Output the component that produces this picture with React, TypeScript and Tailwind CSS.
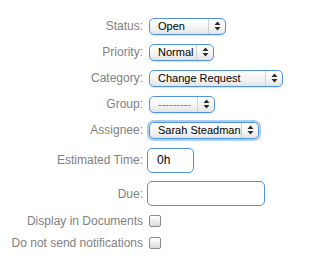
import React from "react";

const label = "w-[143px] shrink-0 text-right text-[12px] text-[#808080]";

function Arrows() {
  return (
    <svg width="7" height="10" viewBox="0 0 7 10">
      <path d="M3.5 0.5 L6.5 4 L0.5 4 Z" fill="#2b2b2b" />
      <path d="M0.5 6 L6.5 6 L3.5 9.5 Z" fill="#2b2b2b" />
    </svg>
  );
}

function Select({ value, width, focus, muted }: { value: string; width: string; focus?: boolean; muted?: boolean }) {
  return (
    <div
      className={`ml-[6px] flex h-[17px] ${width} items-stretch rounded-[5px] border border-[#4f93dc] bg-gradient-to-b from-white via-[#f6f6f6] to-[#e4e4e4] ${
        focus ? "shadow-[0_0_0_2px_#a9cdf3]" : "shadow-[0_1px_1px_rgba(0,0,0,0.12)]"
      }`}
    >
      <div
        className={`flex flex-1 items-center pl-[8px] text-[11px] leading-none ${muted ? "text-[#777]" : "text-black"}`}
      >
        {value}
      </div>
      <div className="flex w-[17px] items-center justify-center border-l border-[#cfcfcf]">
        <Arrows />
      </div>
    </div>
  );
}

function Checkbox() {
  return (
    <div className="ml-[6px] h-[12px] w-[12px] rounded-[2px] border border-[#8a8a8a] bg-gradient-to-b from-white to-[#dcdcdc]" />
  );
}

export default function App() {
  return (
    <div
      className="h-[280px] w-[317px] bg-white pt-[13px]"
      style={{ fontFamily: '"Liberation Sans", Arial, sans-serif' }}
    >
      <div className="flex h-[26px] items-center">
        <div className={label}>Status:</div>
        <Select value="Open" width="w-[77px]" />
      </div>
      <div className="flex h-[26px] items-center">
        <div className={label}>Priority:</div>
        <Select value="Normal" width="w-[65px]" />
      </div>
      <div className="flex h-[26px] items-center">
        <div className={label}>Category:</div>
        <Select value="Change Request" width="w-[134px]" />
      </div>
      <div className="flex h-[26px] items-center">
        <div className={label}>Group:</div>
        <Select value="---------" width="w-[66px]" muted />
      </div>
      <div className="flex h-[26px] items-center">
        <div className={label}>Assignee:</div>
        <Select value="Sarah Steadman" width="w-[110px]" focus />
      </div>
      <div className="flex h-[34px] items-center">
        <div className={label}>Estimated Time:</div>
        <div className="ml-[4px] flex h-[25px] w-[47px] items-center rounded-[5px] border border-[#4f93dc] bg-white pl-[9px] text-[12px] text-black">
          0h
        </div>
      </div>
      <div className="flex h-[33px] items-center">
        <div className={label}>Due:</div>
        <div className="ml-[4px] h-[25px] w-[118px] rounded-[5px] border border-[#4f93dc] bg-white" />
      </div>
      <div className="flex h-[22px] items-center">
        <div className={label}>Display in Documents</div>
        <Checkbox />
      </div>
      <div className="flex h-[21px] items-center">
        <div className={label}>Do not send notifications</div>
        <Checkbox />
      </div>
    </div>
  );
}
